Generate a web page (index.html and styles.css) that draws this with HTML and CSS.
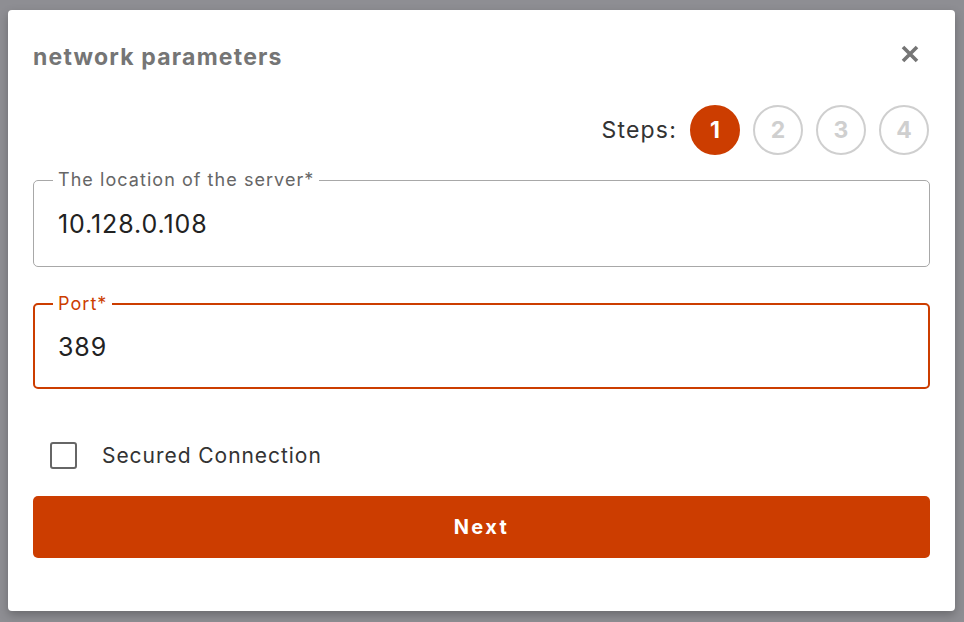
FILE: index.html
```html
<!DOCTYPE html>
<html>
<head>
<meta charset="utf-8">
<link rel="stylesheet" href="styles.css">
</head>
<body>
<div class="dialog">
  <div class="header">
    <h1 class="title">network parameters</h1>
    <button class="close" aria-label="close">
      <svg width="18" height="18" viewBox="0 0 18 18"><path d="M2 2 L16 16 M16 2 L2 16" stroke="#757575" stroke-width="3.6" stroke-linecap="butt" fill="none"/></svg>
    </button>
  </div>
  <div class="steps">
    <span class="steps-label">Steps:</span>
    <span class="step active">1</span>
    <span class="step">2</span>
    <span class="step">3</span>
    <span class="step">4</span>
  </div>
  <fieldset class="field">
    <legend>The location of the server*</legend>
    <div class="value">10.128.0.108</div>
  </fieldset>
  <fieldset class="field focused">
    <legend>Port*</legend>
    <div class="value">389</div>
  </fieldset>
  <label class="check-row">
    <span class="checkbox"></span>
    <span class="check-label">Secured Connection</span>
  </label>
  <button class="next">Next</button>
</div>
</body>
</html>
```
FILE: styles.css
```css
html, body {
  margin: 0;
  padding: 0;
  background: #8e8e93;
  font-family: Inter, "Noto Sans", sans-serif;
}
body {
  padding: 10px 9px 11px 8px;
  height: 622px;
  box-sizing: border-box;
  overflow: hidden;
}
.dialog {
  background: #fff;
  border-radius: 4px;
  box-shadow: 0 4px 10px rgba(0, 0, 0, 0.25);
  height: 601px;
  box-sizing: border-box;
  padding: 32px 25px 0 25px;
  display: flex;
  flex-direction: column;
}
.header {
  display: flex;
  justify-content: space-between;
  align-items: center;
  height: 30px;
}
.title {
  margin: 0;
  font-size: 23px;
  font-weight: 700;
  color: #757575;
  line-height: 30px;
  letter-spacing: 1.2px;
}
.close {
  border: none;
  background: none;
  padding: 0;
  margin: -7px 11px 0 0;
  width: 18px;
  height: 18px;
  display: flex;
}
.steps {
  margin-top: 33px;
  display: flex;
  justify-content: flex-end;
  align-items: center;
  height: 50px;
  gap: 13px;
  padding-right: 1px;
}
.steps-label {
  font-size: 23px;
  color: #333;
  letter-spacing: 1.2px;
}
.step {
  width: 50px;
  height: 50px;
  box-sizing: border-box;
  border-radius: 50%;
  border: 2px solid #cfcfcf;
  color: #cfcfcf;
  font-weight: 700;
  font-size: 23px;
  display: flex;
  align-items: center;
  justify-content: center;
}
.step.active {
  background: #cc3d00;
  border-color: #cc3d00;
  color: #fff;
}
.field {
  margin: 15px 0 0 0;
  border: 1px solid #a8a8a8;
  border-radius: 5px;
  padding: 19px 24px 27px 24px;
  min-width: 0;
}
.field legend {
  font-size: 18px;
  line-height: 20px;
  color: #666;
  padding: 0 5px;
  margin-left: -5px;
  letter-spacing: 1.05px;
}
.value {
  font-size: 25px;
  line-height: 30px;
  color: #222;
  letter-spacing: 0.9px;
}
.field.focused {
  margin-top: 27px;
  border: 2px solid #cc3d00;
  padding: 18px 23px 25px 23px;
}
.field.focused legend {
  color: #cc3d00;
}
.check-row {
  margin-top: 52px;
  display: flex;
  align-items: center;
  height: 28px;
  padding-left: 17px;
}
.checkbox {
  width: 27px;
  height: 27px;
  box-sizing: border-box;
  border: 2px solid #666;
  border-radius: 3px;
}
.check-label {
  margin-left: 25px;
  font-size: 21px;
  color: #333;
  letter-spacing: 0.95px;
}
.next {
  margin-top: 27px;
  height: 62px;
  border: none;
  border-radius: 5px;
  background: #cc3d00;
  color: #fff;
  font-family: Inter, "Noto Sans", sans-serif;
  font-weight: 700;
  font-size: 20px;
  letter-spacing: 2.4px;
}
```
